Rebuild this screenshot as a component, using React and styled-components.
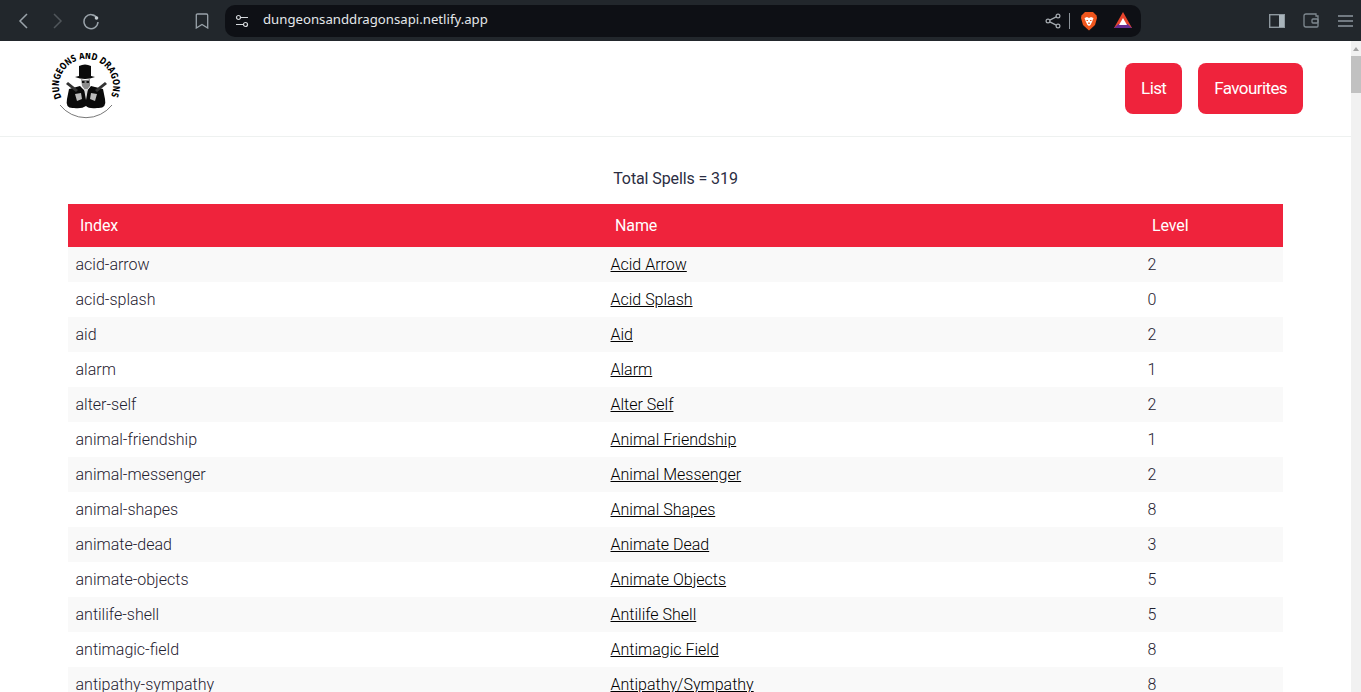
import React from 'react';
import styled, { createGlobalStyle } from 'styled-components';

const GlobalStyle = createGlobalStyle`
  html, body {
    margin: 0;
    height: 100%;
    overflow: hidden;
    background: #fff;
  }
  body {
    font-family: Roboto, "Liberation Sans", sans-serif;
    color: #2b2d42;
  }
`;

const Shell = styled.div`
  display: flex;
  flex-direction: column;
  height: 692px;
`;

// browser toolbar
const Toolbar = styled.div`
  flex: none;
  height: 41px;
  box-sizing: border-box;
  display: flex;
  align-items: center;
  background: #22272c;
  padding-left: 15px;
`;

const ToolIcon = styled.span`
  flex: none;
  display: flex;
  align-items: center;
  justify-content: center;
  width: 18px;
  height: 18px;
  margin-right: ${props => props.gap || 0}px;
  color: ${props => props.dim ? '#50565b' : '#9aa3aa'};
`;

const AddressBar = styled.div`
  flex: none;
  width: 916px;
  height: 32px;
  margin-right: 127px;
  box-sizing: border-box;
  display: flex;
  align-items: center;
  padding-left: 8px;
  padding-right: 9px;
  background: #0e1015;
  border-radius: 10px;
`;

const Url = styled.span`
  flex: 1;
  margin-left: 12px;
  margin-bottom: 3px;
  font-family: "Noto Sans", "DejaVu Sans", sans-serif;
  font-size: 13.2px;
  color: #e4e7ea;
`;

const Divider = styled.span`
  width: 1px;
  height: 16px;
  margin: 0 10px 0 7px;
  background: #8b9298;
`;

const ExtensionGap = styled.span`
  width: 16px;
`;

const Viewport = styled.div`
  flex: 1;
  min-height: 0;
  display: flex;
`;

const Page = styled.div`
  flex: 1;
  min-width: 0;
  overflow: hidden;
`;

const Nav = styled.nav`
  height: 96px;
  box-sizing: border-box;
  display: flex;
  align-items: center;
  justify-content: space-between;
  padding: 0 48px 0 51px;
  border-bottom: 1px solid #eef1f0;
`;

const Buttons = styled.div`
  display: flex;
  gap: 16px;
`;

const NavButton = styled.button`
  height: 51px;
  padding: 0 16px 2px;
  border: none;
  border-radius: 8px;
  background: #ef233c;
  color: #fff;
  font-family: Roboto, sans-serif;
  font-size: 17px;
  font-weight: 400;
  letter-spacing: -0.6px;
`;

const Total = styled.p`
  margin: 31px 0 15px;
  height: 21px;
  line-height: 21px;
  text-align: center;
  font-size: 16px;
  letter-spacing: -0.1px;
  color: #2b2d42;
`;

const Table = styled.table`
  width: 1215px;
  margin-left: 68px;
  border-collapse: collapse;
  table-layout: fixed;
  font-size: 16px;
`;

const Head = styled.th`
  height: 43px;
  padding: 0 12px;
  box-sizing: border-box;
  background: #ef233c;
  color: #fff;
  font-weight: 400;
  letter-spacing: -0.1px;
  text-align: left;
`;

const Row = styled.tr`
  background: ${props => props.striped ? '#f9f9f9' : '#fff'};
`;

const Cell = styled.td`
  height: 35px;
  padding: 0 7.5px;
  box-sizing: border-box;
  font-weight: 300;
  color: #1f2130;
`;

const SpellLink = styled.a`
  color: #000;
  text-decoration: underline;
`;

// fake scrollbar, the page behind it is cut off
const ScrollTrack = styled.div`
  flex: none;
  width: 10px;
  position: relative;
  background: #f1f1f1;
`;

const ScrollArrow = styled.div`
  position: absolute;
  top: 6px;
  left: 2px;
  border-left: 3px solid transparent;
  border-right: 3px solid transparent;
  border-bottom: 4px solid #a3a3a3;
`;

const ScrollThumb = styled.div`
  position: absolute;
  top: 15px;
  left: 0;
  width: 10px;
  height: 37px;
  background: #c1c1c1;
`;

const spells = [
  ['acid-arrow', 'Acid Arrow', 2],
  ['acid-splash', 'Acid Splash', 0],
  ['aid', 'Aid', 2],
  ['alarm', 'Alarm', 1],
  ['alter-self', 'Alter Self', 2],
  ['animal-friendship', 'Animal Friendship', 1],
  ['animal-messenger', 'Animal Messenger', 2],
  ['animal-shapes', 'Animal Shapes', 8],
  ['animate-dead', 'Animate Dead', 3],
  ['animate-objects', 'Animate Objects', 5],
  ['antilife-shell', 'Antilife Shell', 5],
  ['antimagic-field', 'Antimagic Field', 8],
  ['antipathy-sympathy', 'Antipathy/Sympathy', 8],
];

const Logo = () => (
  <svg width="72" height="72" viewBox="0 0 72 72">
    <defs>
      <path id="logoArc" d="M10.6 44.5 A27 27 0 1 1 59.4 44.5" />
    </defs>
    <path d="M9 52 A33 33 0 0 0 61 52" fill="none" stroke="#555" strokeWidth="0.8" />
    <text fill="#000" fontFamily="'DejaVu Sans', sans-serif" fontSize="9.5" fontWeight="700">
      <textPath href="#logoArc" textLength="107" lengthAdjust="spacingAndGlyphs">DUNGEONS AND DRAGONS</textPath>
    </text>
    {/* hat */}
    <path d="M28 23 L28 13 Q34 10 40 13 L40 23 L44 24 Q34 28 24 24Z" fill="#0a0a0a" />
    {/* face */}
    <path d="M30 26 Q34 28 39 26 L39 33 L35 38 L31 33Z" fill="#8c8c8c" />
    <path d="M31 28 H33.5 V30 H31Z M35.5 28 H38 V30 H35.5Z" fill="#111" />
    {/* coat */}
    <path d="M18 36 L29 33 L35 39 L40 33 L52 36 L54 46 Q56 56 46 55 Q38 56 35 53 Q31 56 23 55 Q14 56 16 46Z" fill="#0a0a0a" />
    <path d="M33 36 L35 47 L37 36Z" fill="#d8d8d8" />
    {/* pistols and hands */}
    <path d="M15 31 L17 29 L27 37 L25 39Z M56 31 L54 29 L44 37 L46 39Z" fill="#333" />
    <path d="M24 41 L30 40 L31 46 L26 48Z M46 41 L40 40 L39 46 L44 48Z" fill="#bbb" />
  </svg>
);

const BraveIcon = () => (
  <svg width="18" height="20" viewBox="0 0 18 20">
    <path d="M5 1 H13 L16.5 4.5 L17 7 L15 14 L9 19.5 L3 14 L1 7 L1.5 4.5Z" fill="#f0561d" />
    <path d="M4.5 7 L7 6 L9 7 L11 6 L13.5 7 L12 11 L10.5 14 L9 15 L7.5 14 L6 11Z" fill="#fff" />
    <path d="M6.5 9 H8 V10 H6.5Z M10 9 H11.5 V10 H10Z M8.2 11.5 H9.8 V13 H8.2Z" fill="#f0561d" />
  </svg>
);

const BatIcon = () => (
  <svg width="18" height="17" viewBox="0 0 18 17">
    <path d="M9 0 L18 16 H0Z" fill="#e8452c" />
    <path d="M0 16 L4.5 12 H13.5 L18 16Z" fill="#662d91" />
    <path d="M9 6 L13 13 H5Z" fill="#fff" />
  </svg>
);

function App() {
  return (
    <Shell>
      <GlobalStyle />
      <Toolbar>
        <ToolIcon gap={15}>
          <svg width="18" height="18" viewBox="0 0 18 18" fill="none" stroke="currentColor" strokeWidth="1.5"><path d="M12 2 L5 9 L12 16" /></svg>
        </ToolIcon>
        <ToolIcon dim gap={16}>
          <svg width="18" height="18" viewBox="0 0 18 18" fill="none" stroke="currentColor" strokeWidth="1.5"><path d="M6 2 L13 9 L6 16" /></svg>
        </ToolIcon>
        <ToolIcon gap={93}>
          <svg width="18" height="18" viewBox="0 0 18 18" fill="none" stroke="currentColor" strokeWidth="1.5"><path d="M15 6 A7 7 0 1 0 16 10" /><circle cx="14.5" cy="6" r="1.8" fill="#c5ccd1" stroke="none" /></svg>
        </ToolIcon>
        <ToolIcon gap={14}>
          <svg width="14" height="16" viewBox="0 0 14 16" fill="none" stroke="currentColor" strokeWidth="1.3"><path d="M2.5 1 H11.5 Q12.7 1 12.7 2.2 V15 L7 11.5 L1.3 15 V2.2 Q1.3 1 2.5 1Z" /></svg>
        </ToolIcon>
        <AddressBar>
          <ToolIcon>
            <svg width="14" height="14" viewBox="0 0 14 14" fill="none" stroke="#d5d9dc" strokeWidth="1.2"><circle cx="3.5" cy="3.5" r="2" /><path d="M6 3.5 H13 M1 10.5 H8" /><circle cx="10.5" cy="10.5" r="2" /></svg>
          </ToolIcon>
          <Url>dungeonsanddragonsapi.netlify.app</Url>
          <ToolIcon>
            <svg width="16" height="16" viewBox="0 0 16 16" fill="none" stroke="#a5abb0" strokeWidth="1.2"><circle cx="13" cy="3" r="1.9" /><circle cx="3" cy="8" r="1.9" /><circle cx="13" cy="13" r="1.9" /><path d="M4.8 7.1 L11.2 3.9 M4.8 8.9 L11.2 12.1" /></svg>
          </ToolIcon>
          <Divider />
          <BraveIcon />
          <ExtensionGap />
          <BatIcon />
        </AddressBar>
        <ToolIcon gap={16}>
          <svg width="16" height="14" viewBox="0 0 16 14"><rect x="0.7" y="0.7" width="14.6" height="12.6" fill="none" stroke="#8d979e" strokeWidth="1.4" /><rect x="10" y="1" width="5" height="12" fill="#a9b4bb" /></svg>
        </ToolIcon>
        <ToolIcon gap={16}>
          <svg width="16" height="15" viewBox="0 0 16 15" fill="none" stroke="#7f8990" strokeWidth="1.3"><path d="M13 3 V1 H3 Q1 1 1 3 V12 Q1 14 3 14 H14 Q15 14 15 13 V3Z" /><rect x="9" y="6" width="6" height="4" rx="1" /></svg>
        </ToolIcon>
        <ToolIcon>
          <svg width="15" height="12" viewBox="0 0 15 12" stroke="#8d979e" strokeWidth="1.3"><path d="M0 1 H15 M0 6 H15 M0 11 H15" /></svg>
        </ToolIcon>
      </Toolbar>
      <Viewport>
        <Page>
          <Nav>
            <Logo />
            <Buttons>
              <NavButton>List</NavButton>
              <NavButton>Favourites</NavButton>
            </Buttons>
          </Nav>
          <Total>Total Spells = 319</Total>
          <Table>
            <colgroup>
              <col width="535" />
              <col width="537" />
              <col width="143" />
            </colgroup>
            <thead>
              <tr>
                <Head>Index</Head>
                <Head>Name</Head>
                <Head>Level</Head>
              </tr>
            </thead>
            <tbody>
              {spells.map((spell, i) => (
                <Row key={spell[0]} striped={i % 2 === 0}>
                  <Cell>{spell[0]}</Cell>
                  <Cell><SpellLink href="#">{spell[1]}</SpellLink></Cell>
                  <Cell>{spell[2]}</Cell>
                </Row>
              ))}
            </tbody>
          </Table>
        </Page>
        <ScrollTrack>
          <ScrollArrow />
          <ScrollThumb />
        </ScrollTrack>
      </Viewport>
    </Shell>
  );
}

export default App;
